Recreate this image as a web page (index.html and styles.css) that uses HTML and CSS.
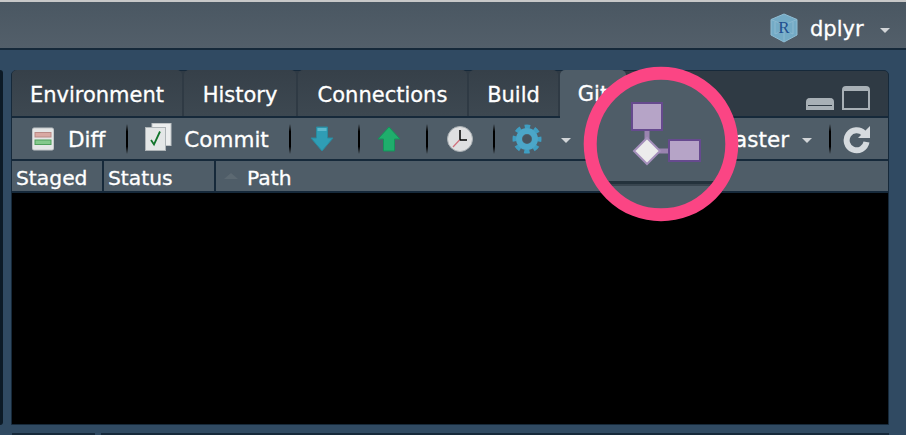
FILE: index.html
```html
<!DOCTYPE html>
<html lang="en">
<head>
<meta charset="utf-8">
<title>RStudio Git pane</title>
<link rel="stylesheet" href="styles.css">
</head>
<body>
<div class="app">
  <header class="topbar">
    <svg class="cube" viewBox="0 0 30 30" width="30" height="30">
      <path d="M15 1 28 6.500V22L15 29 2 22V6.500Z" fill="#74abc6" stroke="#8fbdd4"/>
      <path d="M2 6.500 15 12 28 6.500M15 12V29M6 9V21L15 17 24 21V9" fill="none" stroke="#8cb9d0" stroke-width="1"/>
      <text x="15" y="20" class="cube-r">R</text>
    </svg>
    <span class="project">dplyr</span>
    <span class="caret project-caret"></span>
  </header>
  <main class="workspace">
    <div class="stub"></div>
    <section class="panel">
      <nav class="tabs">
        <div class="tab tab-env">Environment</div>
        <div class="tab tab-hist">History</div>
        <div class="tab tab-conn">Connections</div>
        <div class="tab tab-build">Build</div>
        <div class="tab tab-git">Git</div>
        <div class="win-controls">
          <span class="win-min"></span>
          <span class="win-max"></span>
        </div>
      </nav>
      <div class="toolbar">
        <svg class="icon icon-diff" viewBox="0 0 22 24" width="22" height="24">
          <rect x="0.500" y="1" width="21" height="22" rx="1.500" fill="#e4e6e6" stroke="#c2c6c8"/>
          <rect x="3" y="5.500" width="16" height="4.500" fill="#d9a9a3" stroke="#b98a86"/>
          <rect x="3" y="13" width="16" height="4.500" fill="#84c98c" stroke="#4f9f5c"/>
        </svg>
        <span class="tool-label label-diff">Diff</span>
        <span class="sep sep-1"></span>
        <svg class="icon icon-commit" viewBox="0 0 27 28" width="27" height="28">
          <rect x="7" y="0.500" width="19" height="22" fill="#eceeee" stroke="#bfc4c6"/>
          <rect x="0.500" y="4.500" width="20" height="23" fill="#e4e7e7" stroke="#aeb4b7"/>
          <path d="M6 17 9 21.500 15 8.500" fill="none" stroke="#12752b" stroke-width="1.800"/>
        </svg>
        <span class="tool-label label-commit">Commit</span>
        <span class="sep sep-2"></span>
        <svg class="icon icon-down" viewBox="0 0 24 26" width="24" height="26">
          <path d="M6.500 1H17.500V12H23L12 25 1 12H6.500Z" fill="#2f9db5" stroke="#2a8a9f"/>
          <path d="M7.500 2H16.500V5H7.500Z" fill="#5cb8cc"/>
        </svg>
        <span class="sep sep-3"></span>
        <svg class="icon icon-up" viewBox="0 0 24 26" width="24" height="26">
          <path d="M12 1 23 13H17.500V25H6.500V13H1Z" fill="#1fae6c" stroke="#14935a"/>
        </svg>
        <span class="sep sep-4"></span>
        <svg class="icon icon-clock" viewBox="0 0 26 26" width="26" height="26">
          <circle cx="13" cy="13" r="12.500" fill="#dfe0e1" stroke="#aab0b4"/>
          <path d="M13 4V14H20" fill="none" stroke="#000" stroke-width="1.500"/>
          <path d="M12.500 14 6 21" stroke="#d0707c" stroke-width="1.200"/>
        </svg>
        <span class="sep sep-5"></span>
        <svg class="icon icon-gear" viewBox="0 0 30 30" width="30" height="30">
          <circle cx="15" cy="15" r="12.500" fill="none" stroke="#3f9ec2" stroke-width="4" stroke-dasharray="5.500 4.320" stroke-dashoffset="2.750"/>
          <circle cx="15" cy="15" r="8" fill="none" stroke="#4ba6c8" stroke-width="6"/>
          <circle cx="15" cy="15" r="4" fill="#47545e"/>
        </svg>
        <span class="caret gear-caret"></span>
        <div class="branch">
          <span class="tool-label">master</span>
          <span class="caret branch-caret"></span>
          <span class="sep sep-6"></span>
          <svg class="icon icon-refresh" viewBox="0 0 28 30" width="28" height="30">
            <path d="M21 9.500A10 10 0 1 0 23.500 18" fill="none" stroke="#d5dade" stroke-width="6"/>
            <path d="M27 2V14H15Z" fill="#d5dade"/>
          </svg>
        </div>
      </div>
      <div class="table-head">
        <div class="col col-staged">Staged</div>
        <div class="col col-status">Status</div>
        <div class="col col-path"><span class="sort"></span>Path</div>
      </div>
      <div class="table-body"></div>
    </section>
  </main>
  <div class="bottom-stubs">
    <div class="bottom-left"></div>
    <div class="bottom-right"></div>
  </div>
  <div class="callout">
    <svg viewBox="0 0 156 156" width="156" height="156">
      <circle cx="78" cy="78" r="70" fill="#4f5d68"/>
      <rect x="24" y="115" width="108" height="3" fill="#24323c"/>
      <rect x="24" y="118" width="108" height="2" fill="#38454f"/>
      <circle cx="78" cy="78" r="70.800" fill="none" stroke="#fb4584" stroke-width="13"/>
      <path d="M64 65V74M74 85H86" stroke="#9a84b0" stroke-width="5"/>
      <rect x="49" y="37" width="30" height="27" fill="#b6a4c7" stroke="#664a8e" stroke-width="2"/>
      <rect x="86" y="74" width="31" height="21" fill="#b6a4c7" stroke="#664a8e" stroke-width="2"/>
      <path d="M64 72 77 85 64 98 51 85Z" fill="#ececec" stroke="#a48fbb" stroke-width="2"/>
    </svg>
  </div>
</div>
</body>
</html>
```
FILE: styles.css
```css
* { box-sizing: border-box; }

html, body {
  margin: 0;
  padding: 0;
  background: #304a62;
}

.app {
  position: relative;
  width: 906px;
  height: 435px;
  overflow: hidden;
  background: #304a62;
  font-family: "DejaVu Sans", sans-serif;
  font-size: 20px;
  color: #fff;
  -webkit-text-stroke: 0.3px #fff;
}

.topbar {
  display: flex;
  align-items: center;
  height: 50px;
  padding-top: 6px;
  padding-left: 769px;
  background: linear-gradient(#4a5762, #535f6a);
  border-top: 2px solid #c8c8c8;
  border-bottom: 2px solid #16293a;
}

.cube { flex: none; }

.cube-r {
  font-family: "Liberation Serif", serif;
  font-size: 17px;
  fill: #1f4f8f;
  text-anchor: middle;
  stroke-width: 0;
  -webkit-text-stroke: 0;
}

.project {
  margin-left: 11px;
  margin-top: 2px;
  font-size: 21px;
  line-height: 26px;
}

.caret {
  display: block;
  flex: none;
  width: 0;
  height: 0;
  border-left: 5px solid transparent;
  border-right: 5px solid transparent;
  border-top: 5px solid #d2d5d8;
}

.project-caret { margin-left: 16px; margin-top: 5px; }

.workspace {
  display: flex;
  gap: 8px;
  height: 375px;
  padding-top: 20px;
}

.stub {
  width: 3px;
  height: 355px;
  background: #0c1a26;
  border-radius: 0 3px 3px 0;
}

.panel {
  display: flex;
  flex-direction: column;
  width: 878px;
  height: 355px;
  background: #16293a;
  border: 1px solid #16293a;
  border-radius: 5px 5px 0 0;
}

.tabs {
  display: flex;
  align-items: flex-end;
  gap: 2px;
  height: 47px;
  background: #2f3a44;
  border-bottom: 2px solid #16293a;
  border-radius: 4px 4px 0 0;
  font-size: 21px;
}

.tab {
  display: flex;
  flex: none;
  align-items: center;
  justify-content: center;
  height: 46px;
  padding-top: 3px;
  background: linear-gradient(#364049, #3d4851);
  border-radius: 5px 5px 0 0;
}

.tab-env { width: 170px; }
.tab-hist { width: 112px; }
.tab-conn { width: 169px; }
.tab-build { width: 89px; }

.tab-git {
  width: 66px;
  height: 48px;
  margin-bottom: -2px;
  padding-top: 1px;
  padding-bottom: 1px;
  background: #4f5d68;
}

.win-controls {
  display: flex;
  align-items: flex-end;
  gap: 8px;
  margin-left: auto;
  margin-right: 18px;
  margin-bottom: 6px;
}

.win-min {
  display: block;
  width: 28px;
  height: 12px;
  background: linear-gradient(#a8b0b6 7px, #2f3a44 7px, #2f3a44 8px, #a8b0b6 8px);
  border-radius: 4px 4px 0 0;
  border: 2px solid #a8b0b6;
  border-top-width: 0;
}

.win-max {
  display: block;
  width: 28px;
  height: 24px;
  border: 2px solid #a8b0b6;
  border-top-width: 5px;
  border-radius: 4px 4px 0 0;
}

.toolbar {
  display: flex;
  align-items: center;
  height: 43px;
  background: #4f5d68;
  border-bottom: 2px solid #16293a;
}

.icon { display: block; flex: none; }

.tool-label {
  flex: none;
  margin-top: 2px;
  line-height: 26px;
  font-size: 21.500px;
}

.sep {
  display: block;
  flex: none;
  width: 2px;
  height: 30px;
  background: linear-gradient(transparent, #000 25%, #000 75%, transparent);
}

.icon-diff { margin-left: 20px; }
.label-diff { margin-left: 14px; }
.sep-1 { margin-left: 21px; }
.icon-commit { margin-left: 17px; margin-top: -3px; }
.label-commit { margin-left: 12px; }
.sep-2 { margin-left: 20px; }
.icon-down { margin-left: 19px; }
.sep-3 { margin-left: 24px; }
.icon-up { margin-left: 17px; }
.sep-4 { margin-left: 25px; }
.icon-clock { margin-left: 19px; }
.sep-5 { margin-left: 20px; }
.icon-gear { margin-left: 17px; margin-top: 1px; }
.gear-caret { margin-left: 19px; margin-top: 4px; }

.branch {
  display: flex;
  align-items: center;
  margin-left: auto;
  margin-right: 17px;
}

.branch-caret { margin-left: 13px; margin-top: 4px; }
.sep-6 { margin-left: 17px; }
.icon-refresh { margin-left: 12px; }

.table-head {
  display: flex;
  gap: 2px;
  height: 32px;
  background: #16293a;
  border-bottom: 2px solid #16293a;
  font-size: 20.300px;
}

.col {
  display: flex;
  align-items: center;
  height: 30px;
  padding-top: 3px;
  padding-left: 4px;
  background: #4f5d68;
}

.col-staged { width: 90px; }
.col-status { width: 110px; }
.col-path { flex: 1; padding-left: 8px; }

.sort {
  display: block;
  width: 0;
  height: 0;
  margin-top: -3px;
  margin-right: 9px;
  border-left: 7px solid transparent;
  border-right: 7px solid transparent;
  border-bottom: 6px solid #5c6972;
}

.table-body {
  flex: 1;
  background: #000;
}

.bottom-stubs {
  display: flex;
  gap: 6px;
  height: 2px;
  margin-top: 8px;
  padding-left: 12px;
  padding-right: 17px;
}

.bottom-left { width: 83px; background: #16293a; }
.bottom-right { flex: 1; background: #16293a; }

.callout {
  position: absolute;
  left: 583px;
  top: 66px;
  width: 156px;
  height: 156px;
}

.callout svg { display: block; }
```
